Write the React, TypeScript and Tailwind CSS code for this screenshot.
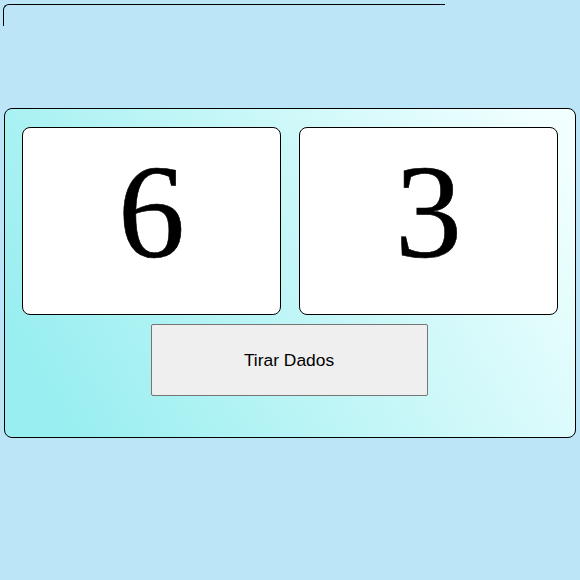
import React, { useState } from "react";

const Die = ({ value }: { value: number }) => (
	<div className="flex h-[188px] justify-center rounded-lg border border-black bg-white pt-[7px]">
		<span className="font-['Liberation_Serif','Times_New_Roman',serif] text-[134px] leading-[1.15] text-black [-webkit-text-stroke:0.6px_black]">
			{value}
		</span>
	</div>
);

export default function App() {
	const [dice, setDice] = useState<[number, number]>([6, 3]);

	function roll() {
		const r = () => Math.floor(Math.random() * 6) + 1;
		setDice([r(), r()]);
	}

	return (
		<div className="min-h-[580px] bg-[#bde5f8] pt-1 font-['Liberation_Sans',Arial,sans-serif]">
			<div className="ml-[3px] h-[22px] w-[442px] rounded-tl-md border-t border-l border-black" />
			<div className="mx-1 mt-[82px] rounded-lg border border-black bg-[linear-gradient(60deg,#98eef0_8%,#f2ffff_96%)] px-[17px] pt-[18px] pb-[41px]">
				<div className="grid grid-cols-2 gap-[18px]">
					<Die value={dice[0]} />
					<Die value={dice[1]} />
				</div>
				<div className="mt-[9px] flex justify-center pr-[2px]">
					<button
						type="button"
						onClick={roll}
						className="h-[72px] w-[277px] rounded-[2px] border border-[#767676] bg-[#efefef] text-[17.4px] text-black"
					>
						Tirar Dados
					</button>
				</div>
			</div>
		</div>
	);
}
